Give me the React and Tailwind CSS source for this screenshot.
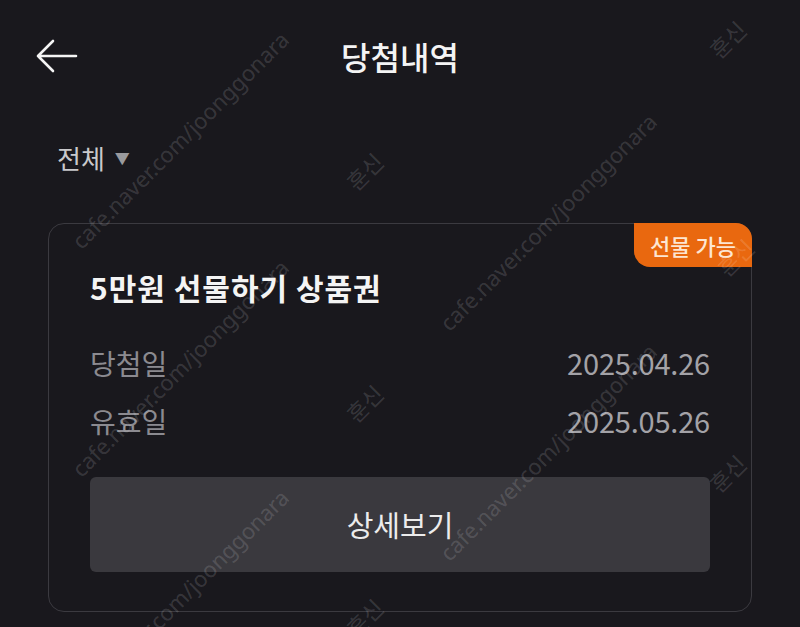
const font = { fontFamily: '"Noto Sans CJK KR", "Noto Sans", sans-serif' };

// watermark overlay, positions written out in full so tailwind picks them up
const marks = [
  { text: "cafe.naver.com/joonggonara", cls: "left-[180px] top-[140px]" },
  { text: "cafe.naver.com/joonggonara", cls: "left-[548px] top-[222px]" },
  { text: "cafe.naver.com/joonggonara", cls: "left-[180px] top-[368px]" },
  { text: "cafe.naver.com/joonggonara", cls: "left-[548px] top-[452px]" },
  { text: "cafe.naver.com/joonggonara", cls: "left-[180px] top-[598px]" },
  { text: "훈신", cls: "left-[728px] top-[40px]" },
  { text: "훈신", cls: "left-[365px] top-[172px]" },
  { text: "훈신", cls: "left-[736px] top-[258px]" },
  { text: "훈신", cls: "left-[365px] top-[404px]" },
  { text: "훈신", cls: "left-[728px] top-[474px]" },
  { text: "훈신", cls: "left-[365px] top-[618px]" },
];

function BackArrow() {
  return (
    <svg width="44" height="36" viewBox="0 0 44 36" fill="none">
      <path d="M42 18H4M19 3L4 18l15 15" stroke="#f4f4f4" strokeWidth="2.6" strokeLinecap="round" strokeLinejoin="round" />
    </svg>
  );
}

function Row({ label, value }) {
  return (
    <div className="flex items-center justify-between h-[36px]">
      <span className="text-[28px] text-[#8b8a90]">{label}</span>
      <span className="text-[29px] text-[#a3a2a7] tracking-[-0.2px]">{value}</span>
    </div>
  );
}

export default function App() {
  return (
    <div className="relative w-[800px] h-[627px] overflow-hidden bg-[#19181d]" style={font}>
      {/* header */}
      <header className="grid grid-cols-[1fr_auto_1fr] items-center h-[112px] px-[34px]">
        <div className="flex items-center"><BackArrow /></div>
        <h1 className="text-[32px] font-medium text-[#f4f4f4] leading-none">당첨내역</h1>
        <div />
      </header>

      {/* filter */}
      <div className="h-[90px] flex items-center pl-[57px] gap-[10px]">
        <span className="text-[26px] text-[#c9c9cc]">전체</span>
        <span className="text-[15px] text-[#9a9a9d] mt-[2px]">▼</span>
      </div>

      {/* card */}
      <div className="relative mx-[48px] mt-[21px] border border-[#3b3a40] rounded-[16px] px-[41px] pt-[45px] pb-[39px]">
        <div className="absolute -top-px -right-px h-[44px] w-[118px] flex items-center justify-center bg-[#e9680f] rounded-tr-[16px] rounded-bl-[16px]">
          <span className="text-[22px] font-medium text-[#fde6d2]">선물 가능</span>
        </div>

        <h2 className="text-[30px] font-bold tracking-[1px] text-[#f4f4f4] leading-[36px]">5만원 선물하기 상품권</h2>

        <div className="mt-[40px] flex flex-col gap-[22px]">
          <Row label="당첨일" value="2025.04.26" />
          <Row label="유효일" value="2025.05.26" />
        </div>

        <button className="mt-[38px] w-full h-[95px] rounded-[6px] bg-[#3a393e] flex items-center justify-center">
          <span className="text-[29px] text-[#ececec]">상세보기</span>
        </button>
      </div>

      {/* watermark overlay */}
      {marks.map((m, i) => (
        <span
          key={i}
          className={`pointer-events-none absolute ${m.cls} -translate-x-1/2 -translate-y-1/2 -rotate-45 whitespace-nowrap text-[22px] text-[#ffffff]/15`}
          style={{ fontFamily: '"Noto Sans", "Noto Sans CJK KR", sans-serif' }}
        >
          {m.text}
        </span>
      ))}
    </div>
  );
}
